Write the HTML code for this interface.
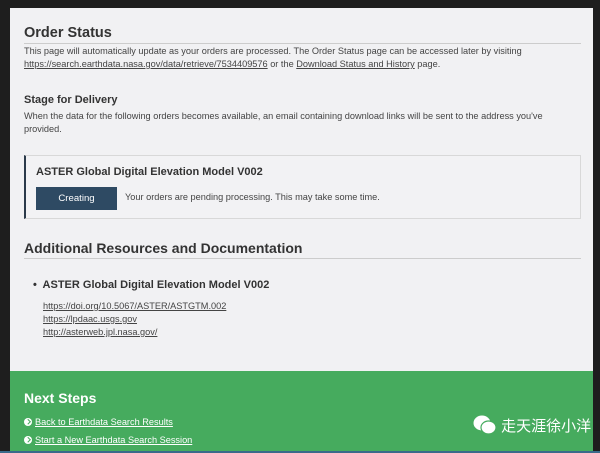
<!DOCTYPE html>
<html><head><meta charset="utf-8"><style>
*{margin:0;padding:0;box-sizing:border-box}
body{width:600px;height:453px;background:#1e1e1e;position:relative;overflow:hidden;font-family:"Liberation Sans",Arial,sans-serif;color:#333}
.page{position:absolute;left:10px;top:8px;width:583px;height:443px;background:#f1f1f3}
.a{position:absolute;white-space:nowrap}
.h1{font-size:14.5px;font-weight:bold;color:#333}
.p{font-size:9.2px;color:#444;line-height:13px}
u{color:#444}
.green{position:absolute;left:10px;top:371px;width:583px;height:80px;background:#46ab5e}
.w{color:#fff}
.ic{display:inline-block;width:8px;height:8px;border-radius:50%;background:#fff;vertical-align:-1px;margin-right:3px;position:relative}
.ic:after{content:"";position:absolute;left:1.5px;top:2px;width:2.5px;height:2.5px;border-right:1.3px solid #46ab5e;border-bottom:1.3px solid #46ab5e;transform:rotate(-45deg)}
</style></head><body>
<div class="page"></div>
<div class="a h1" style="left:24px;top:25px">Order Status</div>
<div class="a" style="left:24px;top:43px;width:557px;height:1px;background:#ccc"></div>
<div class="a p" style="left:24px;top:45px">This page will automatically update as your orders are processed. The Order Status page can be accessed later by visiting<br><u>https://search.earthdata.nasa.gov/data/retrieve/7534409576</u> or the <u>Download Status and History</u> page.</div>
<div class="a" style="left:24px;top:94px;font-size:11px;font-weight:bold">Stage for Delivery</div>
<div class="a p" style="left:24px;top:110px">When the data for the following orders becomes available, an email containing download links will be sent to the address you've<br>provided.</div>
<div class="a" style="left:24px;top:155px;width:557px;height:64px;border:1px solid #d8d8d8;border-left:2px solid #2b3a4a;background:#f2f2f4"></div>
<div class="a" style="left:36px;top:166px;font-size:11px;font-weight:bold">ASTER Global Digital Elevation Model V002</div>
<div class="a" style="left:36px;top:187px;width:81px;height:23px;background:#2e4a63;color:#fff;font-size:9.6px;text-align:center;line-height:23px">Creating</div>
<div class="a p" style="left:125px;top:191px">Your orders are pending processing. This may take some time.</div>
<div class="a" style="left:24px;top:240px;font-size:14px;font-weight:bold">Additional Resources and Documentation</div>
<div class="a" style="left:24px;top:258px;width:557px;height:1px;background:#ccc"></div>
<div class="a" style="left:33px;top:279px;font-size:11px;font-weight:bold">•&nbsp; ASTER Global Digital Elevation Model V002</div>
<div class="a p" style="left:43px;top:300px"><u>https://doi.org/10.5067/ASTER/ASTGTM.002</u><br><u>https://lpdaac.usgs.gov</u><br><u>http://asterweb.jpl.nasa.gov/</u></div>
<div class="green"></div>
<div class="a w" style="left:24px;top:390px;font-size:14px;font-weight:bold">Next Steps</div>
<div class="a w" style="left:24px;top:417px;font-size:9.2px"><span class="ic"></span><u style="color:#fff">Back to Earthdata Search Results</u></div>
<div class="a w" style="left:24px;top:435px;font-size:9.2px"><span class="ic"></span><u style="color:#fff">Start a New Earthdata Search Session</u></div>
<div class="a w" style="left:473px;top:414px;font-size:15px;font-family:'Liberation Sans','Noto Sans CJK SC',sans-serif">
<svg width="24" height="22" viewBox="0 0 24 22" style="vertical-align:-5px"><ellipse cx="9" cy="9" rx="8.5" ry="7.5" fill="#fff"/><ellipse cx="15.5" cy="13.5" rx="7.5" ry="6.5" fill="#fff" stroke="#46ab5e" stroke-width="1.2"/></svg> 走天涯徐小洋</div>
<div class="a" style="left:0;top:451px;width:600px;height:2px;background:#3a6a8a"></div>
</body></html>
